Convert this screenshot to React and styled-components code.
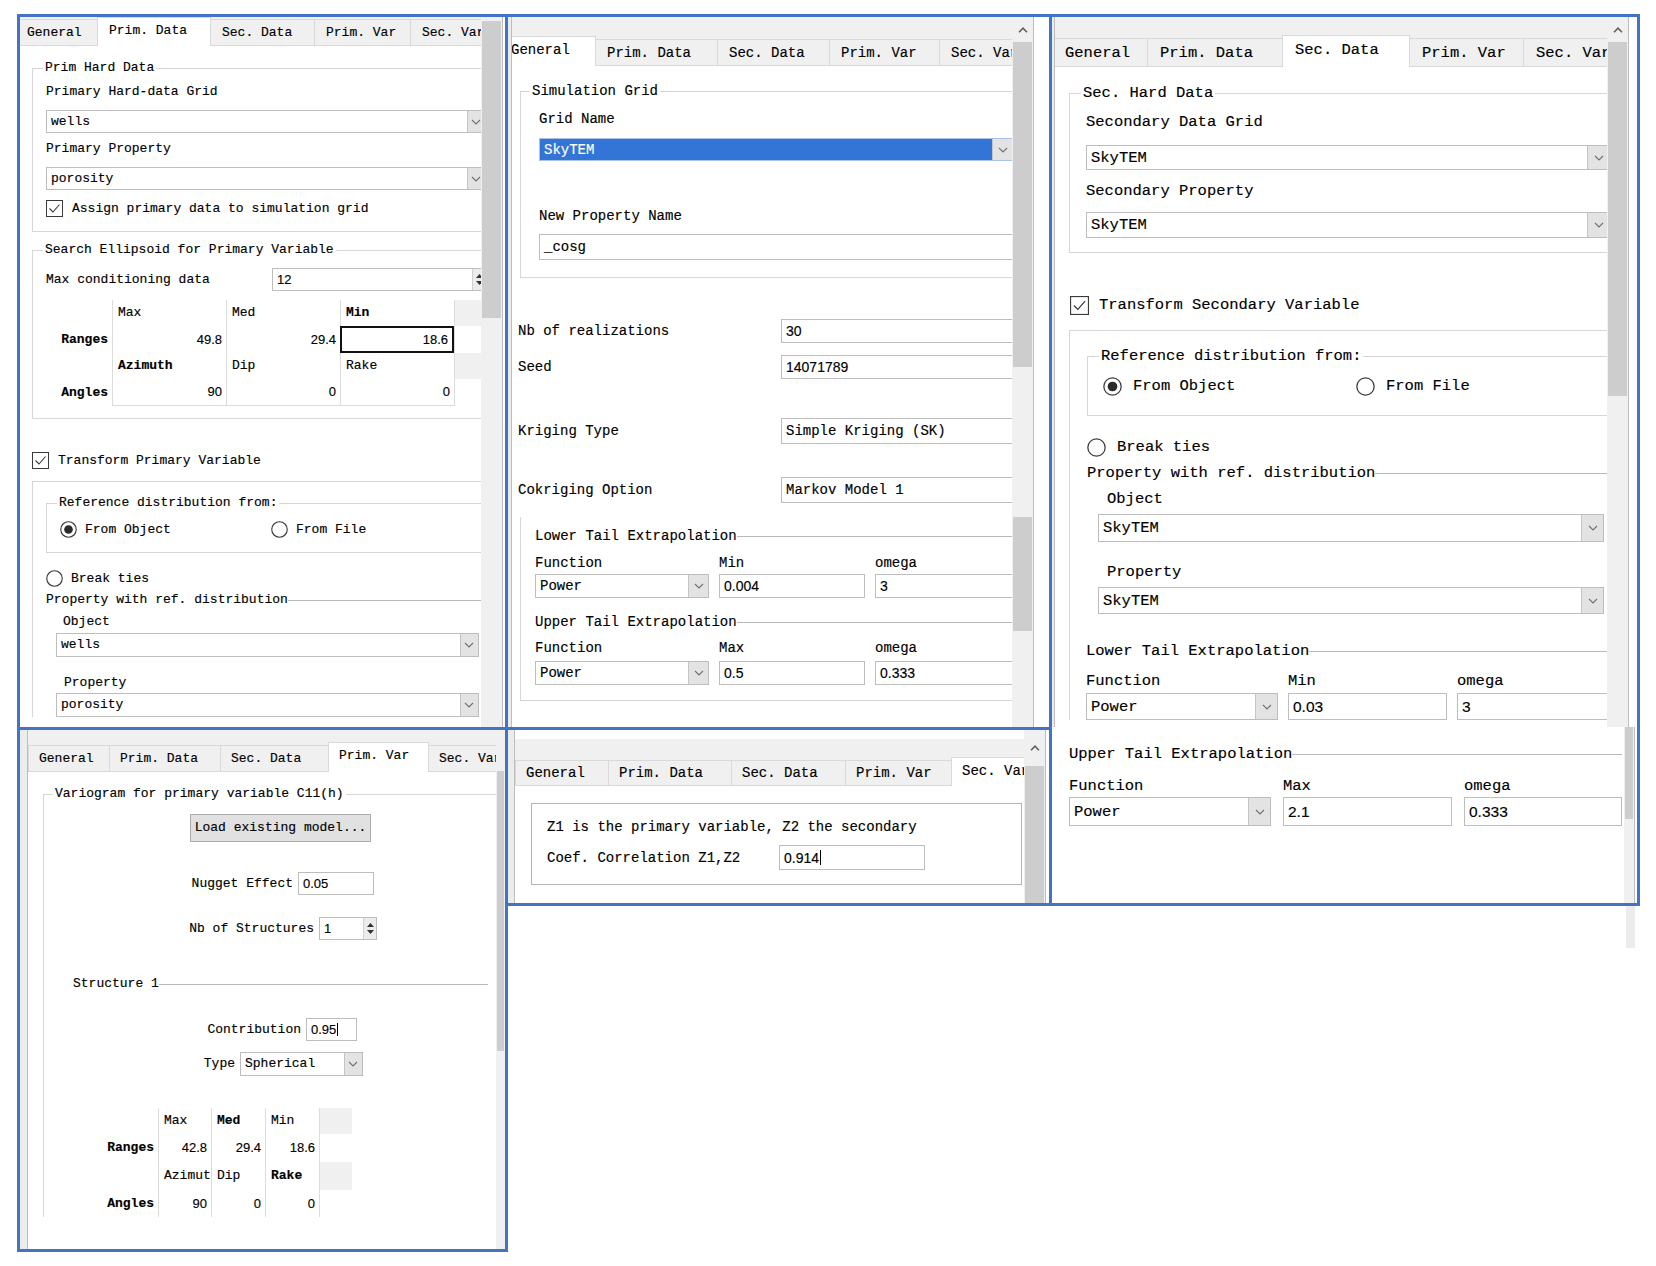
import React from "react";
import styled, { createGlobalStyle, css } from "styled-components";

const BLUE = "#4472c4";
const MONO = '"Liberation Mono", "DejaVu Sans Mono", monospace';
const SANS = '"Liberation Sans", Arial, sans-serif';
const LINE = "#d6d6d6";
const TAB_NAMES = ["General", "Prim. Data", "Sec. Data", "Prim. Var", "Sec. Var"];

const GlobalStyle = createGlobalStyle`
  * { box-sizing: border-box; }
  html, body { margin: 0; background: #fff; }
  body { font-family: ${MONO}; color: #000; }
`;

const spacing = css`
  margin: ${(p) => p.$mt || 0}px ${(p) => p.$mr || 0}px ${(p) => p.$mb || 0}px
    ${(p) => p.$ml || 0}px;
`;

const column = css`
  display: flex;
  flex-direction: column;
  & > * {
    flex-shrink: 0;
  }
`;

const Collage = styled.main`
  display: grid;
  grid-template-columns: 488px 544px 588px;
  grid-template-rows: 713px 176px 346px;
  padding: 14px 0 0 17px;
  width: 1656px;
  height: 1266px;
  overflow: hidden;
`;

const Panel = styled.section`
  grid-column: ${(p) => p.$col};
  grid-row: ${(p) => p.$row};
  margin: 0 -3px -3px 0;
  border: 3px solid ${BLUE};
  background: #fff;
  overflow: hidden;
  display: flex;
  flex-direction: column;
  min-width: 0;
  min-height: 0;
  font-size: ${(p) => p.$fs}px;
  line-height: ${(p) => p.$lh}px;
  -webkit-text-stroke: 0.15px #000;
`;

// leftover scrollbar sliver under the right screenshot
const Stub = styled.div`
  grid-column: 3;
  grid-row: 3;
  margin: 3px 0 0 577px;
  width: 9px;
  height: 42px;
  background: #ececec;
`;

const Window = styled.div`
  display: flex;
  flex: ${(p) => (p.$h ? "none" : "1 1 0")};
  height: ${(p) => (p.$h ? `${p.$h}px` : "auto")};
  min-height: 0;
`;

const WinEdge = styled.div`
  flex: none;
  width: ${(p) => p.$w}px;
  background: #ececec;
  border-right: 1px solid #bdbdbd;
`;

const Main = styled.div`
  flex: 1 1 0;
  min-width: 0;
  display: flex;
  flex-direction: column;
  overflow: hidden;
`;

const TopBand = styled.div`
  flex: none;
  height: ${(p) => p.$h}px;
  background: #f0f0f0;
  border-top: ${(p) => p.$white || 0}px solid #fff;
`;

const TabBar = styled.div`
  flex: none;
  height: ${(p) => p.$h}px;
  display: flex;
  align-items: flex-end;
  margin-left: ${(p) => p.$shift || 0}px;
  background: ${(p) => p.$bg || "#f0f0f0"};
  position: relative;
  z-index: 1;
  white-space: nowrap;
`;

const Tab = styled.div`
  flex: none;
  width: ${(p) => p.$w}px;
  height: ${(p) => (p.$active ? "calc(100% + 1px)" : `calc(100% - ${p.$drop}px)`)};
  margin: 0 -1px ${(p) => (p.$active ? -1 : 0)}px 0;
  padding: 0 0 ${(p) => (p.$active ? 3 : 0)}px ${(p) => p.$pad}px;
  display: flex;
  align-items: center;
  background: ${(p) => (p.$active ? "#fff" : "#f0f0f0")};
  border: 1px solid #d9d9d9;
  border-bottom: none;
  position: relative;
  z-index: ${(p) => (p.$active ? 2 : 1)};
`;

const Page = styled.div`
  ${column}
  flex: 1 1 0;
  min-height: 0;
  width: calc(100% + ${(p) => p.$bleed || 0}px);
  background: #fff;
  border-top: 1px solid #d9d9d9;
  padding-left: ${(p) => p.$pl || 0}px;
`;

const Group = styled.fieldset`
  ${spacing}
  padding: 0;
  min-width: 0;
  border: 1px solid ${LINE};
  ${(p) =>
    p.$open &&
    css`
      border-bottom: none;
    `}
`;

const GroupTitle = styled.legend`
  margin-left: ${(p) => p.$ml}px;
  padding: 0 2px;
  white-space: nowrap;
`;

const GroupBody = styled.div`
  ${column}
  padding: 0 ${(p) => p.$pr || 0}px ${(p) => p.$pb || 0}px ${(p) => p.$pl || 0}px;
`;

const Frame = styled.div`
  ${column}
  ${spacing}
  border-left: 1px solid ${LINE};
  border-top: ${(p) => (p.$noTop ? "none" : `1px solid ${LINE}`)};
  border-bottom: ${(p) => (p.$bottom ? `1px solid ${LINE}` : "none")};
  padding: 0 ${(p) => p.$pr || 0}px ${(p) => p.$pb || 0}px ${(p) => p.$pl || 0}px;
`;

const Sheet = styled.div`
  ${column}
  flex: 1 1 0;
  min-width: 0;
  padding: 0 ${(p) => p.$pr || 0}px 0 ${(p) => p.$pl || 0}px;
  background: #fff;
`;

const LineTitle = styled.div`
  ${spacing}
  display: flex;
  align-items: center;
  white-space: nowrap;
  &::after {
    content: "";
    flex: 1;
    border-top: 1px solid #b9b9b9;
  }
`;

const Label = styled.div`
  ${spacing}
  white-space: nowrap;
`;

const FormRow = styled.div`
  ${spacing}
  display: flex;
  align-items: center;
  height: ${(p) => p.$h}px;
`;

const RowLabel = styled.span`
  flex: none;
  width: ${(p) => p.$w}px;
  text-align: ${(p) => (p.$right ? "right" : "left")};
  padding-right: ${(p) => (p.$right ? 5 : 0)}px;
  white-space: nowrap;
`;

const Field = styled.div`
  ${spacing}
  display: flex;
  align-items: stretch;
  flex: ${(p) => (p.$grow ? "1 1 0" : "none")};
  min-width: 0;
  width: ${(p) => (p.$w ? `${p.$w}px` : "auto")};
  height: ${(p) => p.$h}px;
  border: 1px solid ${(p) => (p.$sel ? "#a9c1e6" : "#bdbdbd")};
  background: ${(p) => (p.$sel ? "#3375d7" : "#fff")};
  color: ${(p) => (p.$sel ? "#fff" : "#000")};
  -webkit-text-stroke-color: ${(p) => (p.$sel ? "#fff" : "#000")};
  font-family: ${(p) => (p.$num ? SANS : MONO)};
`;

const FieldText = styled.span`
  flex: 1 1 0;
  min-width: 0;
  display: flex;
  align-items: center;
  padding-left: ${(p) => p.$pl || 4}px;
  overflow: hidden;
  white-space: nowrap;
`;

const DropBtn = styled.span`
  flex: none;
  width: 1.4em;
  background: #e3e3e3;
  border-left: 1px solid #c4c4c4;
  display: flex;
  align-items: center;
  justify-content: center;
`;

const SpinBtns = styled.span`
  flex: none;
  width: 13px;
  display: flex;
  flex-direction: column;
  justify-content: center;
  align-items: center;
  gap: 3px;
  background: #ececec;
  border-left: 1px solid #d2d2d2;
`;

const Caret = styled.span`
  display: inline-block;
  width: 1px;
  height: 1.05em;
  margin-left: 1px;
  background: #000;
`;

const PushButton = styled.div`
  ${spacing}
  align-self: flex-start;
  width: ${(p) => p.$w}px;
  height: ${(p) => p.$h}px;
  display: flex;
  align-items: center;
  justify-content: center;
  background: #e1e1e1;
  border: 1px solid #adadad;
  white-space: nowrap;
`;

const ColGrid = styled.div`
  ${spacing}
  display: grid;
  grid-template-columns: ${(p) => p.$cols};
  column-gap: ${(p) => p.$gap}px;
  height: ${(p) => (p.$h ? `${p.$h}px` : "auto")};
  white-space: nowrap;
`;

const ChoiceRow = styled.div`
  ${spacing}
  display: flex;
  align-items: center;
`;

const Choice = styled.div`
  ${spacing}
  display: flex;
  align-items: center;
  gap: ${(p) => p.$gap}px;
  flex: none;
  width: ${(p) => (p.$w ? `${p.$w}px` : "auto")};
  white-space: nowrap;
`;

const ParamTable = styled.div`
  ${spacing}
  align-self: flex-start;
  display: grid;
  grid-template-columns: ${(p) => p.$cols};
  grid-template-rows: ${(p) => p.$rows};
`;

const Cell = styled.div`
  display: flex;
  align-items: center;
  justify-content: ${(p) => (p.$right ? "flex-end" : "flex-start")};
  padding: 0 ${(p) => (p.$right ? 4 : 0)}px 0 ${(p) => (p.$right ? 0 : 5)}px;
  border-left: ${(p) => (p.$sep ? "1px solid #dcdcdc" : "none")};
  border-bottom: ${(p) => (p.$bottom ? "1px solid #dcdcdc" : "none")};
  background: ${(p) => (p.$gray ? "#f0f0f0" : "transparent")};
  font-family: ${(p) => (p.$num ? SANS : MONO)};
  font-weight: ${(p) => (p.$bold ? 700 : 400)};
  white-space: nowrap;
  ${(p) =>
    p.$edit &&
    css`
      border: 2px solid #111;
    `}
`;

const InfoBox = styled.div`
  ${column}
  ${spacing}
  border: 1px solid #b4b4b4;
  padding: 14px 0 14px 15px;
`;

const ScrollCol = styled.div`
  flex: none;
  width: ${(p) => p.$w}px;
  display: flex;
  flex-direction: column;
  background: #f0f0f0;
`;

const ScrollArrow = styled.div`
  flex: none;
  height: ${(p) => p.$h}px;
  display: flex;
  align-items: center;
  justify-content: center;
`;

const ScrollThumb = styled.div`
  flex: ${(p) => (p.$h ? "none" : "1 1 0")};
  height: ${(p) => (p.$h ? `${p.$h}px` : "auto")};
  margin: 0 1px;
  background: #cdcdcd;
`;

const ScrollTrack = styled.div`
  flex: ${(p) => (p.$h ? "none" : "1 1 0")};
  height: ${(p) => (p.$h ? `${p.$h}px` : "auto")};
`;

const SideGap = styled.div`
  flex: none;
  width: ${(p) => p.$w}px;
  background: #fff;
  border-left: 1px solid #bdbdbd;
`;

/* ---------- small drawings ---------- */

const Chevron = ({ up }) => (
  <svg width="10" height="6" viewBox="0 0 10 6">
    <polyline
      points={up ? "1,5.2 5,1.2 9,5.2" : "1,1 5,5 9,1"}
      fill="none"
      stroke={up ? "#606060" : "#707070"}
      strokeWidth={up ? 1.6 : 1.1}
    />
  </svg>
);

const Triangle = ({ up }) => (
  <svg width="7" height="4" viewBox="0 0 7 4">
    <polygon points={up ? "0,4 3.5,0 7,4" : "0,0 3.5,4 7,0"} fill="#333" />
  </svg>
);

const CheckIcon = ({ size }) => (
  <svg width={size} height={size} viewBox="0 0 17 17">
    <rect x="0.5" y="0.5" width="16" height="16" fill="#fff" stroke="#3a3a3a" />
    <polyline points="3.5,8.5 7,12 13.5,4.5" fill="none" stroke="#3a3a3a" strokeWidth="1.1" />
  </svg>
);

const RadioIcon = ({ size, on }) => (
  <svg width={size} height={size} viewBox="0 0 18 18">
    <circle cx="9" cy="9" r="8.2" fill="#fff" stroke="#3a3a3a" strokeWidth="1.2" />
    {on && <circle cx="9" cy="9" r="4.6" fill="#2b2b2b" />}
  </svg>
);

/* ---------- widgets ---------- */

function TabStrip({ widths, active, h, shift, pad, drop, bg }) {
  return (
    <TabBar $h={h} $shift={shift} $bg={bg}>
      {TAB_NAMES.map((name, i) => (
        <Tab key={name} $w={widths[i]} $active={i === active} $pad={pad} $drop={drop}>
          {name}
        </Tab>
      ))}
    </TabBar>
  );
}

function Combo({ text, ...rest }) {
  return (
    <Field {...rest}>
      <FieldText>{text}</FieldText>
      <DropBtn>
        <Chevron />
      </DropBtn>
    </Field>
  );
}

function TextBox({ text, caret, ...rest }) {
  return (
    <Field {...rest}>
      <FieldText>
        {text}
        {caret && <Caret />}
      </FieldText>
    </Field>
  );
}

function Spin({ text, ...rest }) {
  return (
    <Field $num {...rest}>
      <FieldText>{text}</FieldText>
      <SpinBtns>
        <Triangle up />
        <Triangle />
      </SpinBtns>
    </Field>
  );
}

function Scroller({ w, arrow, parts }) {
  return (
    <ScrollCol $w={w}>
      {arrow && (
        <ScrollArrow $h={arrow}>
          <Chevron up />
        </ScrollArrow>
      )}
      {parts.map(([kind, h], i) =>
        kind === "thumb" ? <ScrollThumb key={i} $h={h} /> : <ScrollTrack key={i} $h={h} />
      )}
    </ScrollCol>
  );
}

function TailBlock({ cols, gap, h, labels, values, lmt, fmt, ml, mr }) {
  return (
    <>
      <ColGrid $cols={cols} $gap={gap} $mt={lmt} $ml={ml} $mr={mr}>
        {labels.map((l) => (
          <span key={l}>{l}</span>
        ))}
      </ColGrid>
      <ColGrid $cols={cols} $gap={gap} $h={h} $mt={fmt} $ml={ml} $mr={mr}>
        <Combo text={values[0]} $h={h} />
        <TextBox $num text={values[1]} $h={h} />
        <TextBox $num text={values[2]} $h={h} />
      </ColGrid>
    </>
  );
}

/* ---------- panels ---------- */

function PrimDataPanel() {
  return (
    <Panel $col="1" $row="1" $fs={13} $lh={16}>
      <Window>
        <Main>
          <TabStrip widths={[83, 114, 105, 97, 100]} active={1} h={28} shift={-5} pad={11} drop={2} />
          <Page $pl={12} $bleed={30}>
            <Group $mt={14}>
              <GroupTitle $ml={10}>Prim Hard Data</GroupTitle>
              <GroupBody $pl={13} $pr={24} $pb={14}>
                <Label $mt={8}>Primary Hard-data Grid</Label>
                <Combo text="wells" $mt={10} $h={23} />
                <Label $mt={8}>Primary Property</Label>
                <Combo text="porosity" $mt={10} $h={23} />
                <Choice $mt={10} $gap={9}>
                  <CheckIcon size={17} />
                  Assign primary data to simulation grid
                </Choice>
              </GroupBody>
            </Group>
            <Group $mt={10}>
              <GroupTitle $ml={10}>Search Ellipsoid for Primary Variable</GroupTitle>
              <GroupBody $pl={13} $pr={24} $pb={12}>
                <FormRow $mt={10} $h={23}>
                  <RowLabel $w={226}>Max conditioning data</RowLabel>
                  <Spin text="12" $grow $h={23} />
                </FormRow>
                <ParamTable $mt={9} $cols="66px 114px 114px 114px 60px" $rows="26px 27px 26px 27px">
                  <Cell />
                  <Cell $sep>Max</Cell>
                  <Cell $sep>Med</Cell>
                  <Cell $sep $bold>Min</Cell>
                  <Cell $sep $gray />
                  <Cell $right $bold>Ranges</Cell>
                  <Cell $sep $right $num>49.8</Cell>
                  <Cell $sep $right $num>29.4</Cell>
                  <Cell $edit $right $num>18.6</Cell>
                  <Cell $sep />
                  <Cell />
                  <Cell $sep $bold>Azimuth</Cell>
                  <Cell $sep>Dip</Cell>
                  <Cell $sep>Rake</Cell>
                  <Cell $sep $gray />
                  <Cell $right $bold>Angles</Cell>
                  <Cell $sep $bottom $right $num>90</Cell>
                  <Cell $sep $bottom $right $num>0</Cell>
                  <Cell $sep $bottom $right $num>0</Cell>
                  <Cell $sep />
                </ParamTable>
              </GroupBody>
            </Group>
            <Choice $mt={33} $gap={9}>
              <CheckIcon size={17} />
              Transform Primary Variable
            </Choice>
            <Frame $mt={12} $pl={13} $pr={32}>
              <Group $mt={13} $mr={-32}>
                <GroupTitle $ml={10}>Reference distribution from:</GroupTitle>
                <GroupBody $pl={13} $pb={14}>
                  <ChoiceRow $mt={10}>
                    <Choice $w={211} $gap={8}>
                      <RadioIcon size={17} on />
                      From Object
                    </Choice>
                    <Choice $gap={8}>
                      <RadioIcon size={17} />
                      From File
                    </Choice>
                  </ChoiceRow>
                </GroupBody>
              </Group>
              <Choice $mt={17} $gap={8}>
                <RadioIcon size={17} />
                Break ties
              </Choice>
              <LineTitle $mt={5} $mr={-32}>Property with ref. distribution</LineTitle>
              <Label $mt={6} $ml={17}>Object</Label>
              <Combo text="wells" $mt={3} $ml={10} $h={24} />
              <Label $mt={18} $ml={18}>Property</Label>
              <Combo text="porosity" $mt={2} $ml={10} $h={24} />
            </Frame>
          </Page>
        </Main>
        <Scroller w={21} parts={[["track", 4], ["thumb", 297], ["track"]]} />
        <SideGap $w={3} />
      </Window>
    </Panel>
  );
}

function GeneralPanel() {
  return (
    <Panel $col="2" $row="1" $fs={14} $lh={18}>
      <Window>
        <WinEdge $w={4} />
        <Main>
          <TopBand $h={19} />
          <TabStrip widths={[97, 123, 113, 111, 100]} active={0} h={29} shift={-13} pad={11} drop={3} />
          <Page $pl={8} $bleed={20}>
            <Group $mt={16}>
              <GroupTitle $ml={9}>Simulation Grid</GroupTitle>
              <GroupBody $pl={18} $pr={18} $pb={17}>
                <Label $mt={10}>Grid Name</Label>
                <Combo text="SkyTEM" $sel $mt={10} $h={23} />
                <Label $mt={46}>New Property Name</Label>
                <TextBox text="_cosg" $mt={9} $h={26} />
              </GroupBody>
            </Group>
            <FormRow $mt={41} $ml={-2} $h={24}>
              <RowLabel $w={263}>Nb of realizations</RowLabel>
              <TextBox $num $grow text="30" $h={24} />
            </FormRow>
            <FormRow $mt={12} $ml={-2} $h={24}>
              <RowLabel $w={263}>Seed</RowLabel>
              <TextBox $num $grow text="14071789" $h={24} />
            </FormRow>
            <FormRow $mt={39} $ml={-2} $h={26}>
              <RowLabel $w={263}>Kriging Type</RowLabel>
              <TextBox $grow text="Simple Kriging (SK)" $h={26} />
            </FormRow>
            <FormRow $mt={33} $ml={-2} $h={26}>
              <RowLabel $w={263}>Cokriging Option</RowLabel>
              <TextBox $grow text="Markov Model 1" $h={26} />
            </FormRow>
            <Frame $mt={14} $noTop $bottom $pl={14} $pb={15}>
              <LineTitle $mt={10}>Lower Tail Extrapolation</LineTitle>
              <TailBlock
                cols="174px 146px 1fr"
                gap={10}
                h={24}
                lmt={9}
                fmt={2}
                labels={["Function", "Min", "omega"]}
                values={["Power", "0.004", "3"]}
              />
              <LineTitle $mt={15}>Upper Tail Extrapolation</LineTitle>
              <TailBlock
                cols="174px 146px 1fr"
                gap={10}
                h={24}
                lmt={8}
                fmt={4}
                labels={["Function", "Max", "omega"]}
                values={["Power", "0.5", "0.333"]}
              />
            </Frame>
          </Page>
        </Main>
        <Scroller
          w={21}
          arrow={25}
          parts={[["thumb", 325], ["track", 150], ["thumb", 114], ["track"]]}
        />
        <SideGap $w={16} />
      </Window>
    </Panel>
  );
}

function SecDataPanel() {
  return (
    <Panel $col="3" $row="1 / span 2" $fs={15.5} $lh={20}>
      <Window $h={710}>
        <WinEdge $w={3} />
        <Main>
          <TopBand $h={18} />
          <TabStrip widths={[96, 136, 128, 115, 100]} active={2} h={31} shift={-3} pad={12} drop={3} />
          <Page $pl={14} $bleed={20}>
            <Group $mt={16}>
              <GroupTitle $ml={11}>Sec. Hard Data</GroupTitle>
              <GroupBody $pl={16} $pr={16} $pb={14}>
                <Label $mt={9}>Secondary Data Grid</Label>
                <Combo text="SkyTEM" $mt={13} $h={25} />
                <Label $mt={11}>Secondary Property</Label>
                <Combo text="SkyTEM" $mt={11} $h={26} />
              </GroupBody>
            </Group>
            <Choice $mt={42} $ml={1} $gap={10}>
              <CheckIcon size={19} />
              Transform Secondary Variable
            </Choice>
            <Frame $mt={15} $pl={17} $pr={23}>
              <Group $mt={15} $mr={-23}>
                <GroupTitle $ml={11}>Reference distribution from:</GroupTitle>
                <GroupBody $pl={15} $pb={19}>
                  <ChoiceRow $mt={10}>
                    <Choice $w={253} $gap={11}>
                      <RadioIcon size={19} on />
                      From Object
                    </Choice>
                    <Choice $gap={11}>
                      <RadioIcon size={19} />
                      From File
                    </Choice>
                  </ChoiceRow>
                </GroupBody>
              </Group>
              <Choice $mt={21} $gap={11}>
                <RadioIcon size={19} />
                Break ties
              </Choice>
              <LineTitle $mt={6} $mr={-23}>Property with ref. distribution</LineTitle>
              <Label $mt={6} $ml={20}>Object</Label>
              <Combo text="SkyTEM" $mt={5} $ml={11} $h={28} />
              <Label $mt={20} $ml={20}>Property</Label>
              <Combo text="SkyTEM" $mt={5} $ml={11} $h={27} />
              <LineTitle $mt={27} $ml={-1} $mr={-23}>Lower Tail Extrapolation</LineTitle>
              <TailBlock
                cols="192px 159px 1fr"
                gap={10}
                h={27}
                lmt={10}
                fmt={2}
                ml={-1}
                mr={-23}
                labels={["Function", "Min", "omega"]}
                values={["Power", "0.03", "3"]}
              />
            </Frame>
          </Page>
        </Main>
        <Scroller w={21} arrow={25} parts={[["thumb", 354], ["track"]]} />
        <SideGap $w={9} />
      </Window>
      <Window>
        <Sheet $pl={17} $pr={2}>
          <LineTitle $mt={17}>Upper Tail Extrapolation</LineTitle>
          <TailBlock
            cols="202px 169px 1fr"
            gap={12}
            h={29}
            lmt={12}
            fmt={1}
            labels={["Function", "Max", "omega"]}
            values={["Power", "2.1", "0.333"]}
          />
        </Sheet>
        <Scroller w={10} parts={[["thumb", 92], ["track"]]} />
        <SideGap $w={3} />
      </Window>
    </Panel>
  );
}

function PrimVarPanel() {
  return (
    <Panel $col="1" $row="2 / span 2" $fs={13} $lh={16}>
      <Window>
        <WinEdge $w={8} />
        <Main>
          <TopBand $h={12} />
          <TabStrip widths={[82, 112, 109, 101, 100]} active={3} h={29} pad={10} drop={3} />
          <Page $pl={15} $bleed={20}>
            <Group $mt={14} $open>
              <GroupTitle $ml={9}>Variogram for primary variable C11(h)</GroupTitle>
              <GroupBody>
                <PushButton $mt={12} $ml={146} $w={181} $h={28}>
                  Load existing model...
                </PushButton>
                <FormRow $mt={30} $h={23}>
                  <RowLabel $w={254} $right>Nugget Effect</RowLabel>
                  <TextBox $num text="0.05" $w={76} $h={23} />
                </FormRow>
                <FormRow $mt={22} $h={23}>
                  <RowLabel $w={275} $right>Nb of Structures</RowLabel>
                  <Spin text="1" $w={58} $h={23} />
                </FormRow>
                <LineTitle $mt={36} $ml={29} $mr={27}>Structure 1</LineTitle>
                <FormRow $mt={26} $h={23}>
                  <RowLabel $w={262} $right>Contribution</RowLabel>
                  <TextBox $num text="0.95" caret $w={51} $h={23} />
                </FormRow>
                <FormRow $mt={11} $h={24}>
                  <RowLabel $w={196} $right>Type</RowLabel>
                  <Combo text="Spherical" $w={123} $h={24} />
                </FormRow>
                <ParamTable $mt={32} $ml={46} $cols="68px 53px 54px 54px 33px" $rows="26px 28px 28px 27px">
                  <Cell />
                  <Cell $sep>Max</Cell>
                  <Cell $sep $bold>Med</Cell>
                  <Cell $sep>Min</Cell>
                  <Cell $sep $gray />
                  <Cell $right $bold>Ranges</Cell>
                  <Cell $sep $right $num>42.8</Cell>
                  <Cell $sep $right $num>29.4</Cell>
                  <Cell $sep $right $num>18.6</Cell>
                  <Cell $sep />
                  <Cell />
                  <Cell $sep>Azimut</Cell>
                  <Cell $sep>Dip</Cell>
                  <Cell $sep $bold>Rake</Cell>
                  <Cell $sep $gray />
                  <Cell $right $bold>Angles</Cell>
                  <Cell $sep $right $num>90</Cell>
                  <Cell $sep $right $num>0</Cell>
                  <Cell $sep $right $num>0</Cell>
                  <Cell $sep />
                </ParamTable>
              </GroupBody>
            </Group>
          </Page>
        </Main>
        <Scroller w={9} parts={[["track", 41], ["thumb", 280], ["track"]]} />
      </Window>
    </Panel>
  );
}

function SecVarPanel() {
  return (
    <Panel $col="2" $row="2" $fs={14} $lh={18}>
      <Window>
        <WinEdge $w={7} />
        <Main>
          <TopBand $h={27} $white={9} />
          <TabStrip widths={[94, 124, 115, 107, 100]} active={4} h={28} pad={10} drop={3} />
          <Page $pl={16}>
            <InfoBox $mt={17} $mr={2}>
              <Label>Z1 is the primary variable, Z2 the secondary</Label>
              <FormRow $mt={9} $h={25}>
                <RowLabel $w={232}>Coef. Correlation Z1,Z2</RowLabel>
                <TextBox $num text="0.914" caret $w={146} $h={25} />
              </FormRow>
            </InfoBox>
          </Page>
        </Main>
        <Scroller w={21} arrow={36} parts={[["thumb"]]} />
        <SideGap $w={4} />
      </Window>
    </Panel>
  );
}

export default function App() {
  return (
    <>
      <GlobalStyle />
      <Collage>
        <PrimDataPanel />
        <GeneralPanel />
        <SecDataPanel />
        <PrimVarPanel />
        <SecVarPanel />
        <Stub />
      </Collage>
    </>
  );
}
